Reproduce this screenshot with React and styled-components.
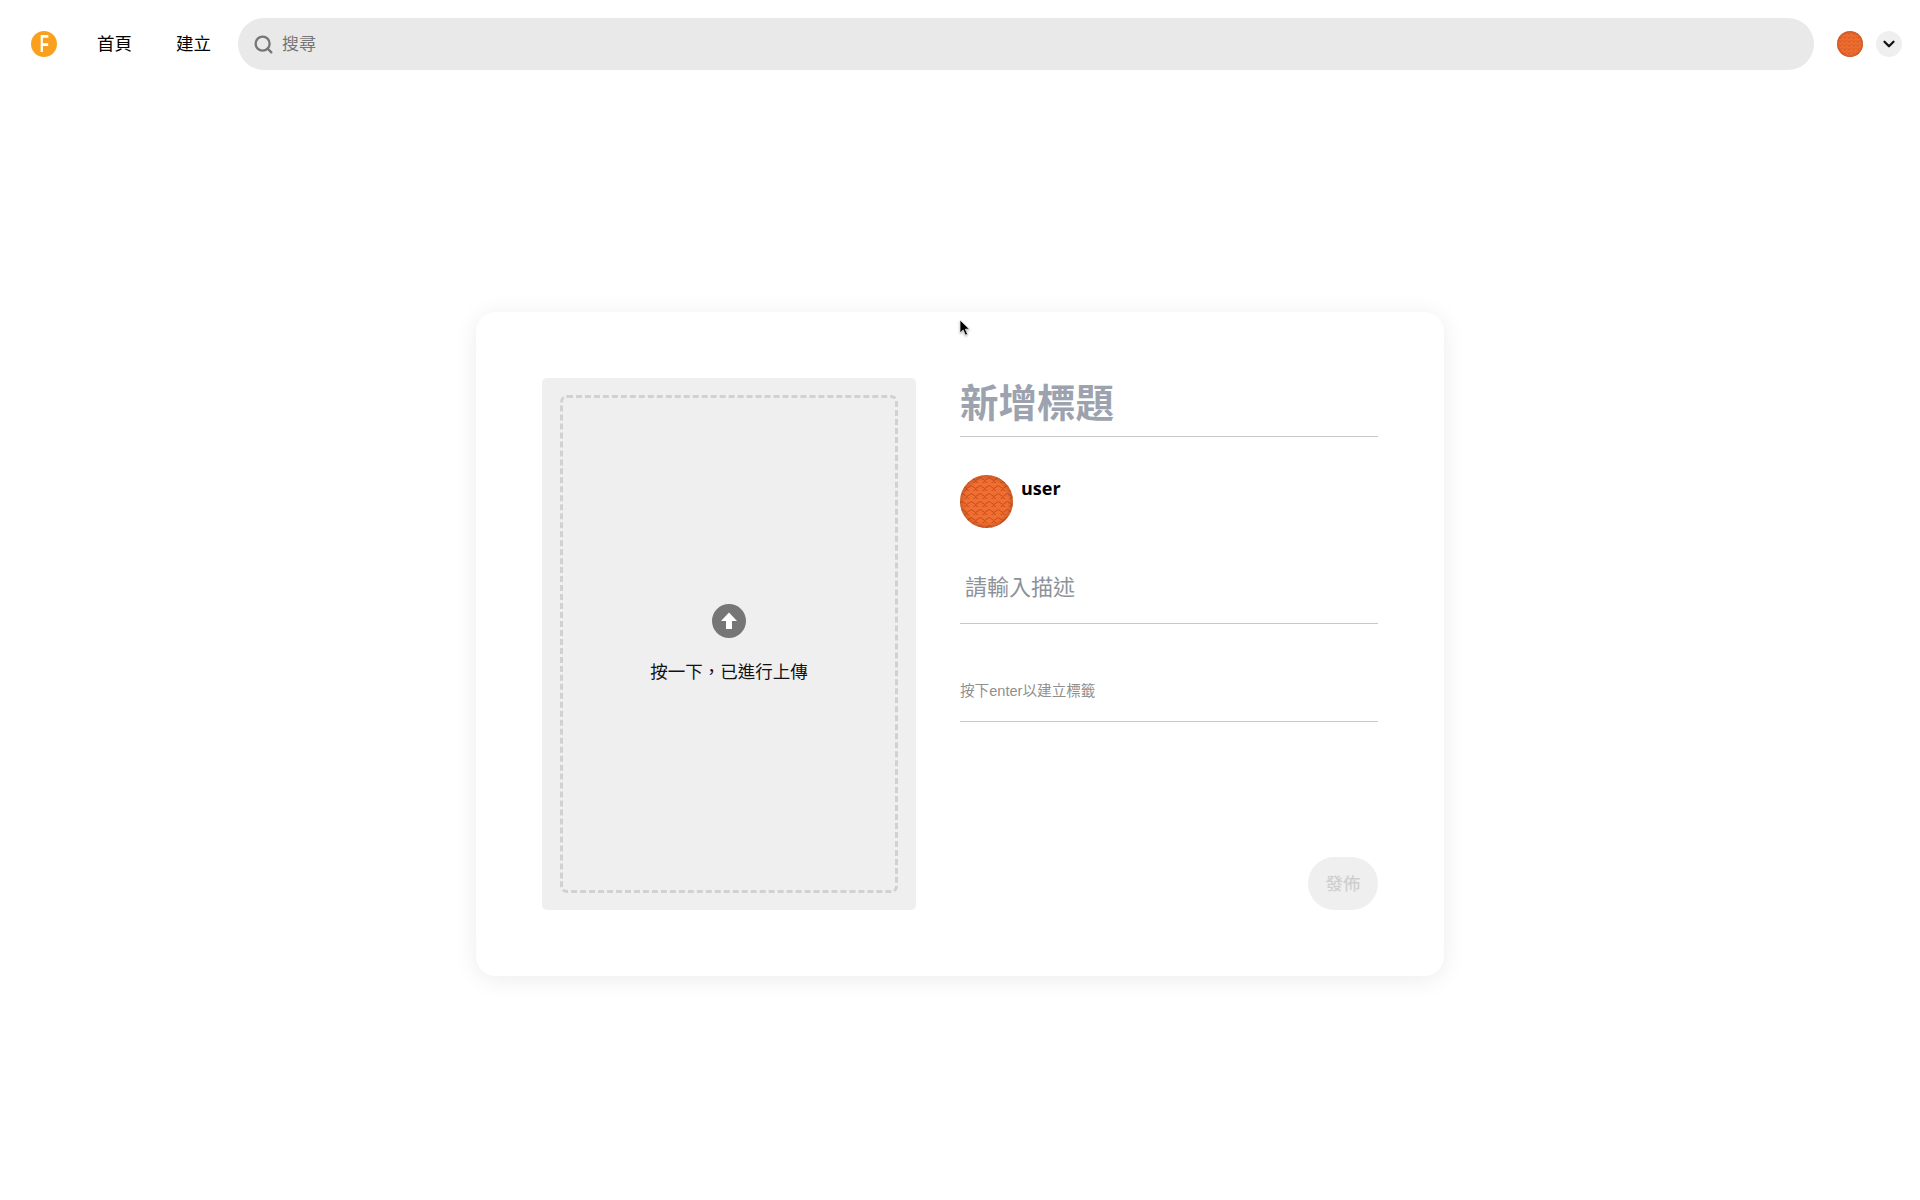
import styled, { createGlobalStyle } from "styled-components";
import { ChevronDown, Search } from "lucide-react";

const GlobalStyle = createGlobalStyle`
    html, body {
        margin: 0;
        padding: 0;
        background: #fff;
        font-family: "Liberation Sans", "Noto Sans CJK TC", sans-serif;
    }
`;

const Page = styled.div`
    position: relative;
    display: flex;
    flex-direction: column;
    min-height: 1200px;
`;

const Header = styled.header`
    display: flex;
    align-items: center;
    height: 88px;
    padding: 0 18px 0 31px;
    box-sizing: border-box;
`;

const Logo = styled.div`
    flex: none;
    width: 26px;
    height: 26px;
    margin-right: 40px;
    border-radius: 50%;
    background: #f9a11f;
    color: #fff;
    display: flex;
    align-items: center;
    justify-content: center;

    span {
        font: 700 24px/26px "Liberation Sans", sans-serif;
        transform: scaleX(0.62);
    }
`;

const NavLink = styled.a`
    flex: none;
    width: 35px;
    margin: 0 ${p => p.$gap}px 2px 0;
    font: 400 17.5px/24px "Noto Sans CJK TC", sans-serif;
    color: #000;
    white-space: nowrap;
`;

const SearchBar = styled.div`
    flex: 1;
    height: 52px;
    display: flex;
    align-items: center;
    gap: 8px;
    padding-left: 15px;
    border-radius: 26px;
    background: #e9e9e9;
    color: #767676;
    font: 400 17px/24px "Noto Sans CJK TC", sans-serif;

    svg {
        flex: none;
    }

    span {
        margin-bottom: 2px;
    }
`;

const AccountAvatar = styled.svg`
    flex: none;
    display: block;
    width: 26px;
    height: 26px;
    margin: 0 13px 0 23px;
`;

const MenuButton = styled.button`
    flex: none;
    width: 26px;
    height: 26px;
    padding: 0;
    border: 0;
    border-radius: 50%;
    background: #efefef;
    color: #111;
    display: flex;
    align-items: center;
    justify-content: center;
`;

const Main = styled.main`
    display: flex;
    justify-content: center;
    padding: 224px 0 0 0;
`;

const Card = styled.section`
    width: 968px;
    height: 664px;
    box-sizing: border-box;
    padding: 66px;
    display: flex;
    gap: 44px;
    border-radius: 20px;
    background: #fff;
    box-shadow: 0 3px 24px rgba(0, 0, 0, 0.08);
`;

const UploadPanel = styled.div`
    flex: none;
    width: 374px;
    height: 532px;
    box-sizing: border-box;
    padding: 17px 18px;
    border-radius: 5px;
    background: #efefef;
`;

const Dropzone = styled.div`
    height: 100%;
    box-sizing: border-box;
    border: 3px dashed #d1d1d1;
    border-radius: 7px;
    display: flex;
    flex-direction: column;
    align-items: center;
    padding-top: 206px;
`;

const UploadIcon = styled.svg`
    display: block;
    width: 34px;
    height: 34px;
`;

const UploadLabel = styled.div`
    margin-top: 21px;
    font: 400 17.5px/24px "Noto Sans CJK TC", sans-serif;
    color: #111;
`;

const Form = styled.div`
    flex: 1;
    display: flex;
    flex-direction: column;
`;

const TitleField = styled.div`
    height: 58px;
    border-bottom: 1px solid #c8c8c8;
    font: 700 38.5px/45px "Noto Sans CJK TC", sans-serif;
    color: #9ca3af;
    white-space: nowrap;
`;

const UserRow = styled.div`
    display: flex;
    gap: 8px;
    margin-top: 38px;
`;

const UserAvatar = styled.svg`
    display: block;
    width: 53px;
    height: 53px;
`;

const UserName = styled.div`
    margin-top: 1px;
    font: 700 18px/24px "Open Sans", sans-serif;
    color: #000;
`;

const DescriptionField = styled.div`
    margin-top: 33px;
    height: 63px;
    box-sizing: border-box;
    padding: 8px 0 0 5px;
    border-bottom: 1px solid #c8c8c8;
    font: 400 22px/32px "Noto Sans CJK TC", sans-serif;
    color: #8d9299;
`;

const TagField = styled.div`
    margin-top: 49px;
    height: 49px;
    box-sizing: border-box;
    padding-top: 8px;
    border-bottom: 1px solid #c8c8c8;
    font: 400 14.6px/20px "Liberation Sans", "Noto Sans CJK TC", sans-serif;
    color: #8f8f8f;
`;

const PublishButton = styled.button`
    align-self: flex-end;
    margin-top: auto;
    width: 70px;
    height: 53px;
    padding: 0 0 2px;
    border: 0;
    border-radius: 27px;
    background: #efefef;
    color: #cfcfcf;
    font: 500 17.5px/24px "Noto Sans CJK TC", sans-serif;
`;

const Cursor = styled.svg`
    position: absolute;
    left: 959px;
    top: 319px;
    width: 12px;
    height: 18px;
    filter: drop-shadow(0 1px 1px rgba(0, 0, 0, 0.3));
`;

const AvatarArt = ({ id }) => (
    <>
        <defs>
            <pattern id={id} width="9" height="8" patternUnits="userSpaceOnUse">
                <path
                    d="M0 4q2.250-3 4.500 0t4.500 0M-4.500 8q2.250-3 4.500 0t4.500 0t4.500 0"
                    fill="none"
                    stroke="#a83f14"
                    strokeWidth="0.7"
                />
            </pattern>
            <radialGradient id={`${id}-edge`}>
                <stop offset="0.8" stopColor="#7a2c0c" stopOpacity="0" />
                <stop offset="1" stopColor="#7a2c0c" stopOpacity="0.3" />
            </radialGradient>
        </defs>
        <circle cx="26.500" cy="26.500" r="26.500" fill="#f26e30" />
        <circle cx="26.500" cy="26.500" r="26.500" fill={`url(#${id})`} />
        <circle cx="26.500" cy="26.500" r="26.500" fill={`url(#${id}-edge)`} />
    </>
);

export default function App() {
    return (
        <Page>
            <GlobalStyle />
            <Header>
                <Logo><span>F</span></Logo>
                <NavLink $gap={44}>首頁</NavLink>
                <NavLink $gap={27}>建立</NavLink>
                <SearchBar>
                    <Search size={21} strokeWidth={2.6} />
                    <span>搜尋</span>
                </SearchBar>
                <AccountAvatar viewBox="0 0 53 53">
                    <AvatarArt id="account-scales" />
                </AccountAvatar>
                <MenuButton aria-label="menu">
                    <ChevronDown size={18} strokeWidth={3} />
                </MenuButton>
            </Header>
            <Main>
                <Card>
                    <UploadPanel>
                        <Dropzone>
                            <UploadIcon viewBox="0 0 34 34">
                                <circle cx="17" cy="17" r="17" fill="#767676" />
                                <path d="M17 8.500 25 17h-5v8h-6v-8H9z" fill="#fff" />
                            </UploadIcon>
                            <UploadLabel>按一下，已進行上傳</UploadLabel>
                        </Dropzone>
                    </UploadPanel>
                    <Form>
                        <TitleField>新增標題</TitleField>
                        <UserRow>
                            <UserAvatar viewBox="0 0 53 53">
                                <AvatarArt id="user-scales" />
                            </UserAvatar>
                            <UserName>user</UserName>
                        </UserRow>
                        <DescriptionField>請輸入描述</DescriptionField>
                        <TagField>按下enter以建立標籤</TagField>
                        <PublishButton>發佈</PublishButton>
                    </Form>
                </Card>
            </Main>
            <Cursor viewBox="0 0 12 18">
                <path d="M1 1v13l3.200-3 2.200 5.200 2.200-1-2.200-5H10.500z" fill="#000" stroke="#fff" strokeWidth="0.7" />
            </Cursor>
        </Page>
    );
}
